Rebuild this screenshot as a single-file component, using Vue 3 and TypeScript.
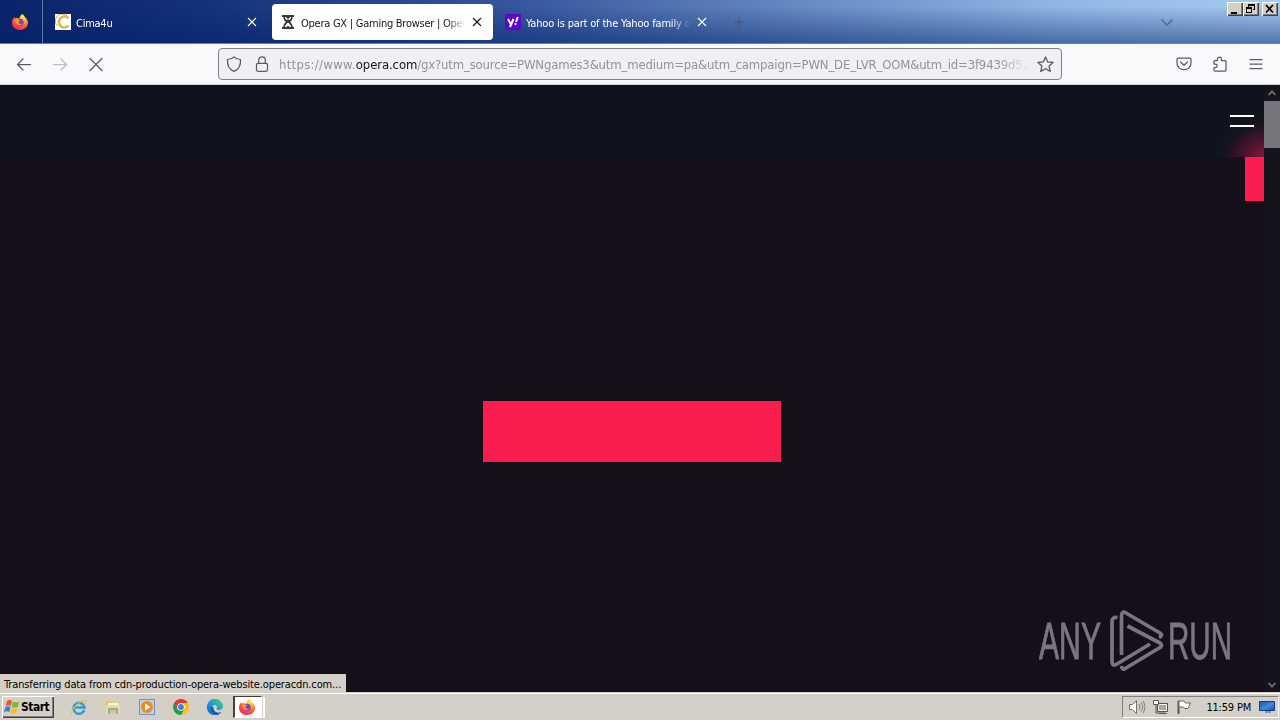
<script setup lang="ts">
interface Tab { title: string; icon: 'cima' | 'wait' | 'yahoo'; active?: boolean }
const tabs: Tab[] = [
  { title: 'Cima4u', icon: 'cima' },
  { title: 'Opera GX | Gaming Browser | Oper', icon: 'wait', active: true },
  { title: 'Yahoo is part of the Yahoo family o', icon: 'yahoo' },
]
const urlTail = '/gx?utm_source=PWNgames3&utm_medium=pa&utm_campaign=PWN_DE_LVR_OOM&utm_id=3f9439d52'
const launchers = ['ie', 'folder', 'media', 'chrome', 'edge'] as const
</script>

<template>
  <div class="screen">
    <svg class="defs" width="0" height="0">
      <defs>
        <radialGradient id="flame" cx=".7" cy=".15" r=".95">
          <stop offset="0" stop-color="#fff04a" /><stop offset=".4" stop-color="#ff9a26" />
          <stop offset=".75" stop-color="#ff4148" /><stop offset="1" stop-color="#e5206f" />
        </radialGradient>
        <linearGradient id="edgeg" x1="0" y1="1" x2="1" y2="0">
          <stop offset="0" stop-color="#0b62b8" /><stop offset=".5" stop-color="#1c9bdc" /><stop offset="1" stop-color="#5bd65a" />
        </linearGradient>
        <linearGradient id="screeng" x1="0" y1="0" x2="1" y2="1">
          <stop offset="0" stop-color="#1c4fa8" /><stop offset=".55" stop-color="#3c8ce2" /><stop offset="1" stop-color="#164a9e" />
        </linearGradient>
        <symbol id="fox" viewBox="0 0 16 16">
          <path d="M10 0c2 1 2.500 2.500 3.400 3.400C15 5 16 7 16 9c0 4-3.500 7-8 7S0 13 0 8.700C0 6 1 4.500 2.400 3l.4 1.500L5 3.700l2 1C8 3 8.500 1 10 0z" fill="url(#flame)" />
          <circle cx="8" cy="8.400" r="3.700" fill="#7542c9" />
          <path d="M3 6l3-1 2.200 1.500L6.500 8c0 2 2.500 2.500 4 1.500-1 2.500-5.500 2.500-6.500-.5z" fill="#ff9424" />
        </symbol>
      </defs>
    </svg>

    <header class="titlebar">
      <div class="pin"><svg width="16" height="16"><use href="#fox" /></svg></div>
      <div v-for="t in tabs" :key="t.title" class="tab" :class="[t.icon, { active: t.active }]">
        <svg class="fav" width="16" height="16" viewBox="0 0 16 16">
          <template v-if="t.icon === 'cima'">
            <rect width="16" height="16" fill="#fff" />
            <path d="M13.500 4.300A5.500 5.500 0 1 0 13.500 11.700" fill="none" stroke="#d9bc58" stroke-width="2.600" />
            <path d="M12 1.800A6.800 6.800 0 0 0 2.500 12" fill="none" stroke="#b99a3a" stroke-width=".8" />
          </template>
          <template v-else-if="t.icon === 'wait'">
            <path d="M2 1h12v2h-1.300c0 2.500-1.200 4-2.700 5 1.500 1 2.700 2.500 2.700 5H14v2H2v-2h1.300C3.300 10.500 4.500 9 6 8 4.500 7 3.300 5.500 3.300 3H2z" fill="#38383d" />
            <path d="M5 3h6c0 1-.4 2-1 2.700H6C5.400 5 5 4 5 3zM7.300 9h1.400L11 12v1H9.500L8 11.500 6.500 13H5v-1z" fill="#fff" />
            <path d="M6 3h4L8 5.500z" fill="#38383d" />
          </template>
          <template v-else>
            <rect width="16" height="16" fill="#5b08c8" />
            <path d="M3 5l2.700 5M8.500 5L5 13M12.800 3l-1.800 5" stroke="#fff" stroke-width="2" fill="none" />
            <circle cx="10.500" cy="10" r="1.100" fill="#fff" />
          </template>
        </svg>
        <span class="tab-title">{{ t.title }}</span>
        <svg class="close" width="10" height="10" viewBox="0 0 10 10"><path d="M1 1l8 8M9 1l-8 8" /></svg>
      </div>
      <svg class="plus" width="12" height="12" viewBox="0 0 12 12"><path d="M6 1v10M1 6h10" /></svg>
      <svg class="list-tabs" width="14" height="8" viewBox="0 0 14 8"><path d="M1.500 1.500L7 7l5.500-5.500" /></svg>
      <div class="win-buttons">
        <svg width="16" height="14" shape-rendering="crispEdges"><path d="M4 10h6v2H4z" /></svg>
        <svg width="16" height="14" shape-rendering="crispEdges"><path d="M5 2h7v6h-2V7h1V4H6v1H5zM3 5h6v6H3zM4 7v3h4V7z" fill-rule="evenodd" /></svg>
        <svg class="shut" width="16" height="14"><path d="M4 3l7 7.500M11 3L4 10.500" stroke="#000" stroke-width="1.700" /></svg>
      </div>
    </header>

    <nav class="toolbar">
      <svg class="nav" width="16" height="16" viewBox="0 0 16 16"><path d="M14.500 8.500H1.500M7 3L1.500 8.500 7 14" /></svg>
      <svg class="nav dim" width="16" height="16" viewBox="0 0 16 16"><path d="M1.500 8.500h13M9 3l5.500 5.500L9 14" /></svg>
      <svg class="nav" width="16" height="16" viewBox="0 0 16 16"><path d="M2 2.500l12 12M14 2.500l-12 12" /></svg>
      <div class="urlbar">
        <svg width="16" height="16" viewBox="0 0 16 16"><path d="M8 .9c2 1.600 4 2.300 6.500 2.600.4 5-1 9.600-6.500 11.800C2.500 13.100 1.100 8.500 1.500 3.500 4 3.200 6 2.500 8 .9z" /></svg>
        <svg width="16" height="16" viewBox="0 0 16 16"><rect x="2.500" y="7.300" width="11" height="8" rx="1.500" /><path d="M4.700 7V4.200a3.300 3.300 0 0 1 6.600 0V7" /></svg>
        <div class="url"><span class="scheme">https://www.</span><b>opera.com</b><span class="tail">{{ urlTail }}</span></div>
        <svg class="star" width="17" height="17" viewBox="0 0 16 16"><path d="M8 1l2.100 4.600 5 .5-3.700 3.400 1.100 5L8 12l-4.500 2.500 1.100-5L.9 6.100l5-.5z" /></svg>
      </div>
      <div class="actions">
        <svg width="16" height="16" viewBox="0 0 16 16"><path d="M2.500 2h11A1.500 1.500 0 0 1 15 3.500V7c0 4-3 6.700-7 6.700S1 11 1 7V3.500A1.500 1.500 0 0 1 2.500 2zM4.500 6L8 9.300 11.500 6" /></svg>
        <svg width="16" height="16" viewBox="0 0 16 16"><path d="M5.500 4.500V3a2 2 0 0 1 4 0v1.500H13a1 1 0 0 1 1 1V14a1 1 0 0 1-1 1H3a1 1 0 0 1-1-1v-2.500h1.500a1.700 1.700 0 0 0 0-3.500H2V5.500a1 1 0 0 1 1-1z" /></svg>
        <svg width="16" height="16" viewBox="0 0 16 16"><path d="M2 3.500h12M2 8h12M2 12.500h12" /></svg>
      </div>
    </nav>

    <div class="viewport">
      <main class="page">
        <div class="page-head"><div class="glow"></div><div class="burger"></div></div>
        <div class="ribbon"></div>
        <div class="cta"></div>
        <div class="status">Transferring data from cdn-production-opera-website.operacdn.com...</div>
        <svg class="watermark" width="200" height="64" viewBox="0 0 200 64">
          <g class="wm-text">
            <text x="1" y="50" textLength="62" lengthAdjust="spacingAndGlyphs">ANY</text>
            <text x="130" y="50" textLength="64" lengthAdjust="spacingAndGlyphs">RUN</text>
          </g>
          <g class="wm-play">
            <path d="M79.500 8.500Q74 7.500 74 13V52Q74 58 79 55L112 35" />
            <path d="M83.500 46V7Q83.500 1.500 88 4L122 24Q125.500 26.500 121 28.500" />
            <path d="M89.500 17L122 34Q125 36 122 38.500L88 59Q84 62 83.500 57" />
          </g>
        </svg>
      </main>
      <aside class="scrollbar">
        <svg width="16" height="16"><path d="M4.500 10L8 6.500l3.500 3.500" /></svg>
        <div class="thumb"></div>
        <svg class="down" width="16" height="16"><path d="M4.500 7L8 10.500 11.500 7" /></svg>
      </aside>
    </div>

    <footer class="taskbar">
      <button class="start">
        <svg width="16" height="16" viewBox="0 0 16 16">
          <path d="M3 2q2.500-2 5 0L6.800 7q-2.500-1.500-5 0z" fill="#e8582a" /><path d="M9 2.500q3 1.500 6 0L13.800 8q-3 1.500-6 0z" fill="#77b843" />
          <path d="M1.500 8q2.500-1.500 5 0l-1.200 5Q2.500 11.500 0 13z" fill="#3a80ce" /><path d="M7.500 9q3 1.500 6 0l-1.200 5q-3 1.500-6 0z" fill="#f5bd28" />
        </svg>Start
      </button>
      <div class="launchers">
        <svg v-for="l in launchers" :key="l" width="16" height="16" viewBox="0 0 16 16">
          <template v-if="l === 'ie'">
            <path d="M13.300 11A5.500 5.500 0 1 1 13.500 8.500H4" fill="none" stroke="#329bd6" stroke-width="2.500" />
            <path d="M1 14.500C-1 12 7 3 13 1.500c3-.6 2 2 1.300 3" fill="none" stroke="#e7bb35" stroke-width="1.200" />
          </template>
          <template v-else-if="l === 'folder'">
            <path d="M1 2h5l1 1.500h8V14H1z" fill="#e6c55f" /><path d="M3 4h11v4H3z" fill="#fff5c6" />
            <path d="M1 6h14v9h-3v-5H5v5H1z" fill="#f4dc8a" /><path d="M3 9h10v6h-2v-4H5v4H3z" fill="#72b5dc" />
          </template>
          <template v-else-if="l === 'media'">
            <rect x=".5" y=".5" width="15" height="15" fill="#b8d2e8" stroke="#6a9bc8" />
            <circle cx="8" cy="8" r="6" fill="#f18a1c" /><path d="M6 4.500L11.500 8 6 11.500z" fill="#fff" />
          </template>
          <template v-else-if="l === 'chrome'">
            <circle cx="8" cy="8" r="8" fill="#fbc116" />
            <path d="M8 8L1.100 4A8 8 0 0 0 8 16l3.500-6z" fill="#229c4d" /><path d="M8 4h6.900L11.500 10z" fill="#fbc116" />
            <path d="M1.100 4A8 8 0 0 1 14.900 4H8L4.500 10z" fill="#e33b2e" />
            <circle cx="8" cy="8" r="3.800" fill="#fff" /><circle cx="8" cy="8" r="2.900" fill="#3b7ded" />
          </template>
          <template v-else>
            <path d="M0 8a8 8 0 0 1 16-.5C16 10 14 11 12 11c-2 0-3-1-2.300-2C10.500 7 9 5.500 7 6c-3 1-3 7 1 8.500 3 1 5 .2 6.500-1.500A8 8 0 0 1 0 8z" fill="url(#edgeg)" />
            <path d="M4 8c-1 4 2 8 6 7.600 2-.3 3.500-1.200 4.500-2.600C10 15 6 12 6.500 8z" fill="#135ba8" />
          </template>
        </svg>
      </div>
      <div class="running"><svg width="16" height="16"><use href="#fox" width="16" height="16" /></svg></div>
      <div class="grip"></div>
      <div class="tray">
        <svg width="18" height="16" viewBox="0 0 18 16"><path d="M1.500 5.500h3l4-4v13l-4-4h-3z" fill="#fff" stroke="#74716d" /><path d="M11 5q2 3 0 6M13 3.500q3.500 4.500 0 9M15 2q4 6 0 12" fill="none" stroke="#85827d" /></svg>
        <svg width="17" height="16" viewBox="0 0 17 16"><path d="M5.500 4.500h10v8h-10z" fill="#a9a7a2" stroke="#55534f" /><path d="M6.500 5.500h8v6h-8z" fill="none" stroke="#f4f4f0" /><path d="M1.500 1.500h5v4h-5z" fill="#fff" stroke="#5b5955" /><path d="M4 6v8h9M7 14.500h8" fill="none" stroke="#5b5955" /></svg>
        <svg width="16" height="16" viewBox="0 0 16 16"><path d="M2.500 15V1.500" stroke="#5b5955" stroke-width="2" /><path d="M3 2h5l1.500 2h5L12 9.500H8.500L7.500 8H3z" fill="#fff" stroke="#6a6763" /></svg>
        <span class="clock">11:59 PM</span>
        <svg width="16" height="14" viewBox="0 0 16 14"><path d="M.5 1.500h15v9H.5z" fill="url(#screeng)" stroke="#163f78" /><path d="M6 11h6v2H6z" fill="#8095b0" /></svg>
      </div>
    </footer>
  </div>
</template>

<style>
body { margin: 0; overflow: hidden; }
</style>

<style scoped>
.screen { position: relative; width: 1280px; height: 720px; overflow: hidden; display: flex; flex-direction: column; font-family: "DejaVu Sans Condensed", "DejaVu Sans", sans-serif; font-size: 11px; font-stretch: condensed; }
.screen * { box-sizing: border-box; }
svg { display: block; flex: none; }
.defs { position: absolute; }
.titlebar { height: 44px; flex: none; display: flex; color: #fff; border-bottom: 1px solid #777c89; background: linear-gradient(to bottom, rgba(0,32,100,0) 15%, rgba(0,32,105,.5) 100%), linear-gradient(to right, #0a246a 0%, #143279 16%, #35569c 40%, #6589c2 62%, #91b8e5 83%, #a6caf0 100%); }
.pin { width: 43px; border-right: 1px solid #6077a8; padding: 14px 0 0 12px; }
.tab { width: 221px; height: 36px; margin: 4px 4px 0 0; padding: 0 11px 0 8px; display: flex; align-items: center; border-radius: 4px; }
.tab.cima { width: 225px; padding-left: 12px; }
.tab.active { background: #fff; color: #15141a; }
.fav { margin-right: 5px; }
.tab-title { flex: 1; min-width: 0; overflow: hidden; white-space: nowrap; letter-spacing: -.25px; padding-top: 2px; -webkit-mask-image: linear-gradient(to right, #000 calc(100% - 20px), transparent); mask-image: linear-gradient(to right, #000 calc(100% - 20px), transparent); }
.yahoo .tab-title { letter-spacing: -.17px; }
.close { margin-left: 6px; fill: none; stroke: currentColor; stroke-width: 1.1; }
.plus { margin: 16px 0 0 11px; fill: none; stroke: #4c587a; stroke-width: 1.3; }
.list-tabs { margin: 18px 0 0 auto; fill: none; stroke: #506a93; stroke-width: 1.5; }
.win-buttons { display: flex; margin: 2px 2px 0 53px; height: 14px; }
.win-buttons svg { background: #d4d0c8; box-shadow: inset 1px 1px #fff, inset -1px -1px #404040, inset -2px -2px #808080; }
.win-buttons .shut { margin-left: 3px; }
.toolbar { height: 41px; flex: none; background: #f9f9fb; display: flex; align-items: center; padding: 0 16px; border-bottom: 1px solid #cfcfd5; }
.toolbar svg { fill: none; stroke: #5b5b66; stroke-width: 1.25; stroke-linejoin: round; stroke-linecap: round; }
.nav { margin-right: 20px; }
.toolbar .dim { stroke: #bcbcc2; }
.urlbar { width: 844px; height: 32px; margin-left: 94px; display: flex; align-items: center; padding: 0 7px; border: 1px solid #808087; border-radius: 4px; background: #f0f0f4; }
.urlbar svg:nth-child(2) { margin-left: 12px; }
.url { margin: 0 8px 0 9px; flex: 1; min-width: 0; overflow: hidden; white-space: nowrap; font-size: 13px; color: #929298; -webkit-mask-image: linear-gradient(to right, #000 calc(100% - 32px), transparent); mask-image: linear-gradient(to right, #000 calc(100% - 32px), transparent); }
.url b { font-weight: 400; color: #15141a; letter-spacing: -.1px; }
.scheme { letter-spacing: .3px; }
.tail { letter-spacing: -.17px; }
.actions { display: flex; gap: 20px; margin-left: auto; }
.viewport { flex: 1; display: flex; min-height: 0; }
.page { position: relative; width: 1264px; background: #150f19; }
.page-head { position: relative; height: 72px; background: #10131e; }
.glow { position: absolute; right: 0; bottom: 0; width: 50px; height: 48px; background: radial-gradient(ellipse 48px 42px at 100% 100%, #851739 0%, rgba(111,20,51,.7) 35%, rgba(55,18,38,.25) 75%, transparent 100%); }
.burger { position: absolute; right: 10px; top: 30px; width: 24px; height: 12px; border-top: 2px solid #fff; border-bottom: 2px solid #fff; }
.ribbon { width: 19px; height: 44px; margin-left: auto; background: #fa1e4e; }
.cta { width: 298px; height: 61px; margin: 200px 0 0 483px; background: #fa1e4e; }
.status { position: absolute; left: 0; bottom: 0; width: 346px; height: 18px; padding-left: 4px; line-height: 21px; background: #d4d0c8; color: #000; white-space: nowrap; letter-spacing: -.13px; }
.watermark { position: absolute; left: 1038px; top: 524px; opacity: .9; }
.wm-text { font: 51px "Liberation Sans", Arial, sans-serif; fill: #85818d; stroke: #85818d; stroke-width: .9; }
.wm-play { fill: none; stroke: #85818d; stroke-width: 3.7; stroke-linejoin: round; }
.scrollbar { width: 16px; background: #15131c; display: flex; flex-direction: column; }
.scrollbar svg { fill: none; stroke: #77757b; stroke-width: 1.7; }
.thumb { height: 47px; background: #77757b; }
.scrollbar .down { margin-top: auto; }
.taskbar { height: 28px; flex: none; display: flex; background: #d4d0c8; border-top: 1px solid #d4d0c8; box-shadow: inset 0 1px #fff; }
.start { width: 52px; height: 22px; margin: 3px 0 0 2px; padding: 0 0 0 2px; display: flex; align-items: center; gap: 1px; border: 0; background: #d4d0c8; box-shadow: inset 1px 1px #fff, inset -1px -1px #404040, inset -2px -2px #808080; font: bold 12px "DejaVu Sans Condensed", sans-serif; letter-spacing: -.5px; color: #000; }
.launchers { display: flex; gap: 18px; margin: 6px 0 0 17px; }
.running { width: 29px; height: 22px; margin: 3px 0 0 10px; padding: 2px 0 0 4px; background: #fff; border: 1px solid #fff; border-top-color: #404040; border-left: 2px solid #404040; }
.grip { width: 2px; height: 21px; margin: 4px 0 0 1px; background: #fff; }
.tray { width: 157px; height: 22px; margin: 3px 1px 0 auto; padding: 0 3px 0 5px; display: flex; align-items: center; border: 1px solid; border-color: #808080 #fff #fff #808080; color: #000; }
.tray svg:nth-child(2) { margin-left: 6px; }
.tray svg:nth-child(3) { margin-left: 7px; }
.clock { margin-left: auto; margin-right: 8px; white-space: nowrap; letter-spacing: -.2px; padding-top: 1px; }
</style>
